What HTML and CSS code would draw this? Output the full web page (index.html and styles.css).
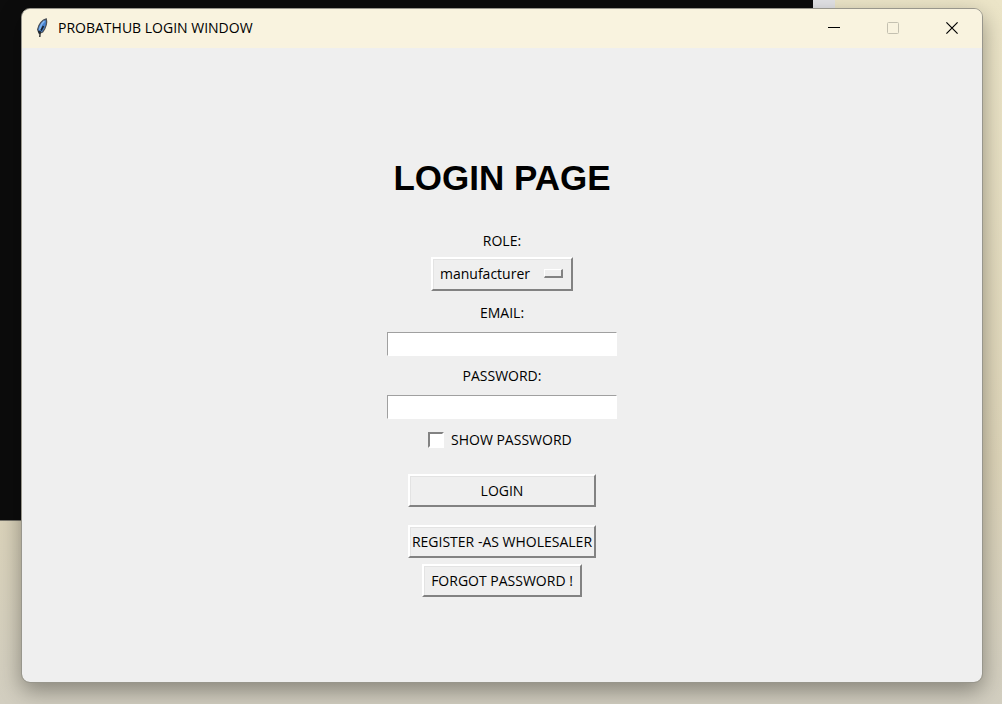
FILE: index.html
```html
<!DOCTYPE html>
<html lang="en">
<head>
<meta charset="utf-8">
<title>PROBATHUB LOGIN WINDOW</title>
<link rel="stylesheet" href="styles.css">
</head>
<body>
<div class="desktop">
  <div class="console" aria-hidden="true"></div>
  <section class="window">
    <header class="titlebar">
      <svg class="feather" width="14" height="20" viewBox="0 0 14 20" aria-hidden="true">
        <path d="M11.3 1C7.5 1.6 3.6 6 2.6 11.5L4.2 15.5L7.6 14C10.4 10.5 12.3 5 11.3 1Z" fill="#4682cf" stroke="#4b5058" stroke-width="1.3"/>
        <path d="M9.5 3C7.5 4.500 5.500 8 4.600 12" fill="none" stroke="#7fb2ee" stroke-width="1.6"/>
        <path d="M8.500 8L6 12.500M3.500 13L5.200 15.500" fill="none" stroke="#17202b" stroke-width="1.6"/>
        <path d="M5.200 13L4.800 19" fill="none" stroke="#2a2c2e" stroke-width="1.4"/>
      </svg>
      <span class="caption">PROBATHUB LOGIN WINDOW</span>
      <div class="controls">
        <button class="control" type="button" aria-label="Minimize">
          <svg width="12" height="12" viewBox="0 0 12 12"><path d="M0 5.5H12" stroke="#000"/></svg>
        </button>
        <button class="control" type="button" aria-label="Maximize" disabled>
          <svg width="12" height="12" viewBox="0 0 12 12"><rect x=".5" y=".5" width="11" height="11" rx="1" fill="none" stroke="#c4c0b0"/></svg>
        </button>
        <button class="control" type="button" aria-label="Close">
          <svg width="12" height="12" viewBox="0 0 12 12"><path d="M.4.4L11.6 11.6M11.6.4L.4 11.6" stroke="#000" stroke-width="1.2"/></svg>
        </button>
      </div>
    </header>
    <main class="content">
      <h1 class="heading">LOGIN PAGE</h1>
      <form class="form">
        <label class="label" for="role">ROLE:</label>
        <div class="picker">
          <select class="select raised" id="role"><option>manufacturer</option></select>
          <span class="indicator"></span>
        </div>
        <label class="label" for="email">EMAIL:</label>
        <input class="entry" id="email" type="text">
        <label class="label" for="password">PASSWORD:</label>
        <input class="entry" id="password" type="password">
        <div class="check">
          <input class="box" id="show" type="checkbox">
          <label class="check-label" for="show">SHOW PASSWORD</label>
        </div>
        <div class="actions">
          <button class="button raised wide" type="button">LOGIN</button>
          <button class="button raised wide register" type="button">REGISTER -AS WHOLESALER</button>
          <button class="button raised forgot" type="button">FORGOT PASSWORD !</button>
        </div>
      </form>
    </main>
  </section>
</div>
</body>
</html>
```
FILE: styles.css
```css
* { box-sizing: border-box; }
body {
  margin: 0;
  font-family: "Open Sans", "Noto Sans", sans-serif;
  font-size: 14px;
  line-height: 20px;
  color: #000;
}
.desktop {
  position: relative;
  display: flex;
  min-height: 100vh;
  padding: 8px 19px 21px 21px;
  overflow: hidden;
  background: linear-gradient(#ece5c8, #ddd4b8 65%, #d2cec0);
}
.console {
  position: absolute;
  top: 0;
  left: 0;
  width: 835px;
  height: 521px;
  background: #0c0c0c;
  border-right: 22px solid #e3e3e6;
  border-bottom: 1px solid #77756c;
}
.window {
  position: relative;
  flex: 1;
  display: flex;
  flex-direction: column;
  overflow: hidden;
  border: 1px solid #98968c;
  border-radius: 9px;
  background: #efefef;
  background-clip: padding-box;
  box-shadow: 0 8px 22px rgba(0, 0, 0, .36);
}
.titlebar {
  display: flex;
  align-items: center;
  height: 39px;
  padding: 0 1px 2px 13px;
  background: #f9f3df;
}
.feather { margin-right: 9px; }
.controls { display: flex; margin-left: auto; }
.control {
  display: flex;
  align-items: center;
  justify-content: center;
  width: 59px;
  height: 37px;
  padding: 0;
  border: 0;
  background: none;
}
.content {
  display: flex;
  flex-direction: column;
  align-items: center;
  padding-top: 109px;
}
.heading {
  margin: 0 0 32px;
  font: bold 35px/42px "Liberation Sans", Arial, sans-serif;
}
.form {
  display: flex;
  flex-direction: column;
  align-items: center;
}
.raised {
  border: 2px solid;
  border-color: #fff #828282 #828282 #fff;
  border-radius: 0;
  background: #efefef;
  box-shadow: inset 1px 1px #e3e3e3;
  color: #000;
  font: inherit;
}
.picker { position: relative; margin: 6px 0 12px; }
.select {
  display: block;
  width: 142px;
  height: 34px;
  padding: 0 7px;
  appearance: none;
}
.indicator {
  position: absolute;
  top: 12px;
  right: 10px;
  width: 19px;
  height: 9px;
  border: solid;
  border-width: 1px 2px 2px 1px;
  border-color: #fff #828282 #828282 #fff;
  pointer-events: none;
}
.entry {
  width: 230px;
  height: 24px;
  margin: 9px 0 10px;
  padding: 0 4px;
  border: 1px solid;
  border-color: #a0a0a0 #fff #fff #a0a0a0;
  background: #fff;
  font: inherit;
}
.check { display: flex; align-items: center; gap: 7px; margin: 1px 0 24px; }
.check-label { min-width: 125px; }
.box {
  width: 16px;
  height: 16px;
  margin: 0;
  appearance: none;
  border: 2px solid;
  border-color: #828282 #fff #fff #828282;
  background: #fff;
}
.box:checked { background: #444; }
.actions { display: flex; flex-direction: column; align-items: center; }
.button {
  height: 33px;
  padding: 0;
  overflow: hidden;
  white-space: nowrap;
}
.wide { width: 188px; margin-bottom: 18px; }
.register { margin-bottom: 6px; }
.forgot { width: 160px; }
```
